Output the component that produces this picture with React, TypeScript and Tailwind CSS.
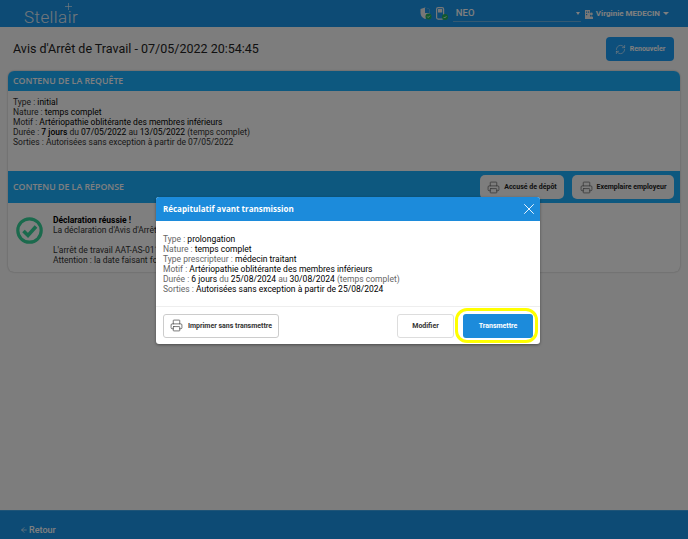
import { ArrowLeft, Printer, RefreshCw, X } from "lucide-react";

function PrintButton({ label, width }: { label: string, width: string }) {
    return <button type="button" className={`${width} h-[24px] flex items-center justify-center gap-[4px] rounded-[5px] bg-[#fafafa] text-[7px] font-bold text-[#222] whitespace-nowrap`}>
        <Printer size={13} strokeWidth={1.2} className="text-[#555]" />
        {label}
    </button>
}

function SuccessIcon() {
    return <svg width="27" height="27" viewBox="0 0 27 27" className="shrink-0">
        <circle cx="13.5" cy="13.5" r="11.7" fill="none" stroke="#36d49a" strokeWidth="3.2" />
        <path d="M7.5 14 L12 18.5 L20 9.5" fill="none" stroke="#36d49a" strokeWidth="3.6" />
    </svg>
}

function ShieldIcon() {
    return <svg width="12" height="13" viewBox="0 0 12 13">
        <path d="M5 0.5 L9.5 2 V6 C9.5 9 7.5 10.8 5 12 C2.5 10.8 0.5 9 0.5 6 V2 Z" fill="#eee" />
        <path d="M5 0.5 L9.5 2 V6 H5 Z" fill="#1a94e8" />
        <circle cx="8.5" cy="9.5" r="3" fill="#22b35e" />
        <path d="M7.2 9.5 L8.2 10.5 L9.9 8.7" fill="none" stroke="#fff" strokeWidth="0.8" />
    </svg>
}

function DeviceIcon() {
    return <svg width="12" height="13" viewBox="0 0 12 13">
        <rect x="0.6" y="0.6" width="7" height="11.5" rx="1.5" fill="none" stroke="#eee" strokeWidth="1.2" />
        <rect x="2" y="2" width="4.2" height="3.5" fill="#eee" />
        <circle cx="9" cy="10" r="3" fill="#22b35e" />
        <path d="M7.7 10 L8.7 11 L10.4 9.2" fill="none" stroke="#fff" strokeWidth="0.8" />
    </svg>
}

function DoctorIcon() {
    return <svg width="8" height="10" viewBox="0 0 8 10">
        <path d="M0 1 H5 V10 H0 Z" fill="#eee" />
        <rect x="1" y="2.5" width="1.2" height="1.2" fill="#1a94e8" />
        <rect x="3" y="2.5" width="1.2" height="1.2" fill="#1a94e8" />
        <rect x="1" y="5" width="1.2" height="1.2" fill="#1a94e8" />
        <circle cx="6.4" cy="5" r="1.4" fill="#eee" />
        <path d="M4.6 10 V8 Q6.4 6.5 8 8 V10 Z" fill="#eee" />
    </svg>
}

export default function App() {
    return <div className="relative h-[539px] w-[688px] overflow-hidden flex flex-col bg-white font-['Roboto',sans-serif] text-[8.5px] leading-[10px] text-[#333]">
        <header className="h-[27px] shrink-0 bg-[#1a96ea] flex items-center pl-[24px] pr-[19px] text-white">
            <div className="relative text-[17px] font-light tracking-wide mt-[7px] text-[#e4eef6]">
                Stellair
                <svg width="7" height="7" viewBox="0 0 7 7" className="absolute right-[6px] top-[-9px]">
                    <path d="M3.5 0 V7 M0 3.5 H7" stroke="#fff" strokeWidth="0.6" />
                </svg>
            </div>
            <div className="ml-auto flex items-center">
                <ShieldIcon />
                <span className="ml-[4px]"><DeviceIcon /></span>
                <div className="ml-[5px] w-[128px] h-[17px] border-b border-[#6db4e4] flex items-center justify-between pl-[3px] text-[9.5px] font-medium">
                    NEO
                    <span className="w-0 h-0 border-x-[2.5px] border-x-transparent border-t-[3px] border-t-white mr-[1px]" />
                </div>
                <span className="ml-[4px] mr-[3px]"><DoctorIcon /></span>
                <span className="text-[8px] font-bold">Virginie MEDECIN</span>
                <span className="ml-[3px] w-0 h-0 border-x-[3px] border-x-transparent border-t-[3px] border-t-white" />
            </div>
        </header>

        <main className="flex-1 bg-[#fbfbfb] px-[8px]">
            <div className="h-[44px] flex items-center justify-between pl-[5px] pr-[6px]">
                <h1 className="text-[12.5px] font-normal text-[#222]">Avis d'Arrêt de Travail - 07/05/2022 20:54:45</h1>
                <button type="button" className="h-[24px] w-[68px] rounded-[4px] bg-[#1a9ef8] text-white text-[7px] font-bold flex items-center justify-center gap-[4px]">
                    <RefreshCw size={11} strokeWidth={1.3} />
                    Renouveler
                </button>
            </div>

            <section className="rounded-[6px] overflow-hidden bg-[#fefefe] shadow-[0_0_2px_rgba(0,0,0,0.3)]">
                <h2 className="h-[20px] bg-[#1bb0ff] flex items-center px-[5px] font-['Open_Sans',sans-serif] text-[8.8px] font-semibold text-white">CONTENU DE LA REQUÊTE</h2>
                <div className="h-[80px] px-[5px] pt-[6px]">
                    <p>Type : <span className="text-black">initial</span></p>
                    <p>Nature : <span className="text-black">temps complet</span></p>
                    <p>Motif : <span className="text-black">Artériopathie oblitérante des membres inférieurs</span></p>
                    <p>Durée : <b className="text-black font-medium">7 jours</b> du <span className="text-black">07/05/2022</span> au <span className="text-black">13/05/2022</span> (temps complet)</p>
                    <p>Sorties : Autorisées sans exception à partir de 07/05/2022</p>
                </div>
                <div className="h-[32px] bg-[#1bb0ff] flex items-center justify-between pl-[5px] pr-[6px] text-white">
                    <h2 className="font-['Open_Sans',sans-serif] text-[8.8px] font-semibold">CONTENU DE LA RÉPONSE</h2>
                    <div className="flex gap-[8px]">
                        <PrintButton label="Accusé de dépôt" width="w-[84px]" />
                        <PrintButton label="Exemplaire employeur" width="w-[102px]" />
                    </div>
                </div>
                <div className="h-[69px] flex items-start pl-[8px] pt-[14px] gap-[10px]">
                    <SuccessIcon />
                    <div className="-mt-[2px]">
                        <p className="font-bold text-black">Déclaration réussie !</p>
                        <p>La déclaration d'Avis d'Arrêt</p>
                        <p className="mt-[10px]">L'arrêt de travail AAT-AS-011</p>
                        <p>Attention : la date faisant fo</p>
                    </div>
                </div>
            </section>
        </main>

        <footer className="h-[29px] shrink-0 bg-[#1a96ea] border-t border-[#3fa8ee] flex items-end pl-[20px] pb-[4px] text-white text-[9px] font-medium">
            <ArrowLeft size={8} className="mr-[1px] mb-[1px]" />
            Retour
        </footer>

        <div className="absolute inset-0 bg-black/50 pl-[156px] pt-[197px]">
            <div className="w-[384px] h-[147px] rounded-[3px] bg-white overflow-hidden flex flex-col shadow-[0_1px_3px_rgba(0,0,0,0.4)]">
                <div className="h-[24px] shrink-0 bg-[#1c8bdb] flex items-center justify-between pl-[7px] pr-[2px] text-white">
                    <span className="font-['Open_Sans',sans-serif] text-[8px] font-bold">Récapitulatif avant transmission</span>
                    <X size={18} strokeWidth={1.2} />
                </div>
                <div className="flex-1 pl-[7px] pt-[13px] text-[#666]">
                    <p>Type : <span className="text-black">prolongation</span></p>
                    <p>Nature : <span className="text-black">temps complet</span></p>
                    <p>Type prescripteur : <span className="text-black">médecin traitant</span></p>
                    <p>Motif : <span className="text-black">Artériopathie oblitérante des membres inférieurs</span></p>
                    <p>Durée : <span className="text-black">6 jours</span> du <span className="text-black">25/08/2024</span> au <span className="text-black">30/08/2024</span> (temps complet)</p>
                    <p>Sorties : <span className="text-black">Autorisées sans exception à partir de 25/08/2024</span></p>
                </div>
                <div className="h-[38px] shrink-0 border-t border-[#eee] flex items-center px-[7px] text-[7px] font-bold text-[#333]">
                    <button type="button" className="h-[24px] w-[116px] border border-[#ccc] rounded-[3px] flex items-center justify-center gap-[5px] whitespace-nowrap">
                        <Printer size={13} strokeWidth={1.2} />
                        Imprimer sans transmettre
                    </button>
                    <button type="button" className="ml-auto h-[24px] w-[57px] border border-[#ddd] rounded-[3px]">Modifier</button>
                    <div className="relative ml-[9px]">
                        <button type="button" className="block h-[24px] w-[70px] rounded-[3px] bg-[#1c8bdb] text-white">Transmettre</button>
                        <span className="absolute -left-[8px] -right-[5px] -top-[6px] -bottom-[5px] border-[3px] border-[#ffff00] rounded-[12px]" />
                    </div>
                </div>
            </div>
        </div>
    </div>
}
